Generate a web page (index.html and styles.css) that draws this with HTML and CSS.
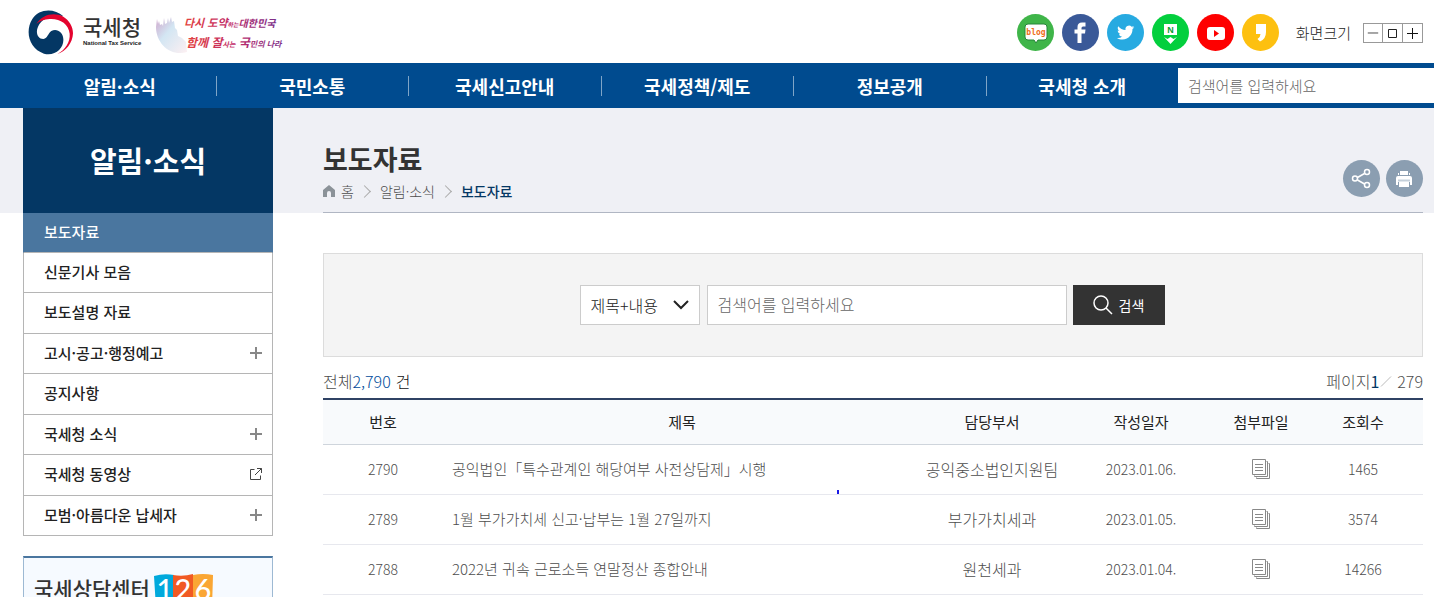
FILE: index.html
```html
<!DOCTYPE html>
<html lang="ko">
<head>
  <meta charset="UTF-8">
  <meta name="viewport" content="width=device-width, initial-scale=1">
  <title>보도자료 | 국세청</title>
  <link rel="stylesheet" href="styles.css">
</head>
<body>
  <svg class="symbols" aria-hidden="true">
    <symbol id="files" viewBox="0 0 18 20">
      <path d="M4.500 18.500v1h13v-15h-1M2.500 16.500v1h13v-15h-1" fill="none" stroke="#888"/>
      <path d="M.5.5h13v15H.5zM3 5.500h8M3 8.500h8M3 11.500h8" fill="none" stroke="#888"/>
    </symbol>
  </svg>

  <header class="header">
    <a class="logo" href="#">
      <svg class="logo-mark" viewBox="12 11 138 138" aria-hidden="true">
        <path d="M118 30C90 5 45 7 25 38 2 75 15 128 60 142c34 8 60-16 58-44-1-21-20-33-36-24-11 7-10 22-24 24-17 0-24-20-16-37C53 36 88 22 118 30z" fill="#043764"/>
        <path d="M37 53C55 23 92 17 118 31c17 10 29 29 29 50-1 29-21 54-47 62 25-13 39-37 37-61-3-30-30-46-60-44-16 1-31 6-40 15z" fill="#e4032e"/>
      </svg>
      <span class="logo-text">
        <strong>국세청</strong>
        <small>National Tax Service</small>
      </span>
    </a>
    <svg class="slogan" viewBox="0 0 130 48" role="img" aria-label="다시 도약하는 대한민국 함께 잘사는 국민의 나라">
      <defs>
        <linearGradient id="ink" x1="0" x2="1">
          <stop offset="0" stop-color="#e3413f"/>
          <stop offset=".5" stop-color="#c02b69"/>
          <stop offset="1" stop-color="#7c2f8a"/>
        </linearGradient>
        <linearGradient id="wave" x1="0" y1="0" x2="1" y2="1">
          <stop offset="0" stop-color="#cfa6cb"/>
          <stop offset=".4" stop-color="#d3e6f3"/>
          <stop offset="1" stop-color="#fdf0f2"/>
        </linearGradient>
      </defs>
      <path d="M2 10l1 5 1-3 1 4 2-1 1 2 1-8 1 6 2-1 1-5 1 5 2-6 1 5 2-1 1 7 2 2 1 6 4 2 4 4 1 10c-16 5-31-8-31-25z" fill="url(#wave)"/>
      <g font-family="Noto Sans CJK KR, sans-serif" font-weight="700" font-style="italic">
        <text x="29" y="18" font-size="11" fill="url(#ink)">다시 도약<tspan font-size="6">하는</tspan><tspan font-size="10">대한민국</tspan></text>
        <text x="31" y="38" font-size="12" fill="url(#ink)">함께 잘<tspan font-size="7">사는</tspan> 국<tspan font-size="8">민의 나라</tspan></text>
      </g>
    </svg>

    <div class="header-right">
      <ul class="sns">
        <li><a href="#" aria-label="블로그">
          <svg viewBox="0 0 37 37"><circle cx="18.500" cy="18.500" r="18.500" fill="#3fb549"/><path d="M11 10h16q3 0 3 3v10q0 3-3 3h-6l-2 3-2-3h-6q-3 0-3-3V13q0-3 3-3z" fill="#fff" stroke="#27863a"/><text x="19" y="21" text-anchor="middle" font-family="DejaVu Sans Mono" font-size="8" font-weight="700" fill="#ef6c17">blog</text></svg>
        </a></li>
        <li><a href="#" aria-label="페이스북">
          <svg viewBox="0 0 37 37"><circle cx="18.500" cy="18.500" r="18.500" fill="#3a5998"/><path d="M15.500 29V19.500H12.500V15.500h3v-2.500q0-4.500 4.500-4.500h3.500v4H21q-1.500 0-1.500 1.500v1.500h4l-.500 4h-3.500V29z" fill="#fff"/></svg>
        </a></li>
        <li><a href="#" aria-label="트위터">
          <svg viewBox="0 0 37 37"><circle cx="18.500" cy="18.500" r="18.500" fill="#27aae1"/><path transform="translate(10 10) scale(.72)" d="M24 4.600c-.9.400-1.800.7-2.800.8 1-.6 1.800-1.600 2.200-2.700-1 .6-2 1-3.100 1.200A4.900 4.900 0 0 0 11.900 8.400C7.800 8.200 4.200 6.300 1.700 3.200.4 5.400 1 8.300 3.200 9.700c-.8 0-1.600-.2-2.200-.6 0 2.300 1.600 4.400 3.900 4.900-.7.200-1.500.2-2.200.1.600 2 2.400 3.400 4.600 3.400A9.900 9.900 0 0 1 0 19.500c2.200 1.400 4.800 2.200 7.500 2.200 9.100 0 14.300-7.700 14-14.600 1-.7 1.800-1.600 2.500-2.500z" fill="#fff"/></svg>
        </a></li>
        <li><a href="#" aria-label="네이버 포스트">
          <svg viewBox="0 0 37 37"><circle cx="18.500" cy="18.500" r="18.500" fill="#03cf3d"/><path d="M12 10h13v11H12zM12 23l3.500 2 3-2 3 2 3.500-2-6.500 7z" fill="#fff"/><text x="18.500" y="19" text-anchor="middle" font-family="Liberation Sans" font-size="9" font-weight="700" fill="#0a9b32">N</text></svg>
        </a></li>
        <li><a href="#" aria-label="유튜브">
          <svg viewBox="0 0 37 37"><circle cx="18.500" cy="18.500" r="18.500" fill="#fe0000"/><rect x="10" y="13" width="18" height="13" rx="3" fill="#fff"/><path d="M17 16l5 3.500-5 3.500z" fill="#fe0000"/></svg>
        </a></li>
        <li><a href="#" aria-label="카카오스토리">
          <svg viewBox="0 0 37 37"><circle cx="18.500" cy="18.500" r="18.500" fill="#fdc010"/><path d="M14 10h10v8q0 7-6 9.500L15.500 25q3-2 3-5H14z" fill="#fff"/></svg>
        </a></li>
      </ul>
      <span class="zoom-label">화면크기</span>
      <div class="zoom">
        <button type="button" aria-label="축소"><svg viewBox="0 0 19 18"><path d="M4 9.500h11" stroke="#444"/></svg></button>
        <button type="button" aria-label="기본"><svg viewBox="0 0 19 18"><path d="M5.500 5.500h8v8h-8z" fill="none" stroke="#222"/></svg></button>
        <button type="button" aria-label="확대"><svg viewBox="0 0 19 18"><path d="M4 9.500h11M9.500 4v11" stroke="#111"/></svg></button>
      </div>
    </div>
  </header>

  <nav class="gnb">
    <ul>
      <li><a href="#">알림·소식</a></li>
      <li><a href="#">국민소통</a></li>
      <li><a href="#">국세신고안내</a></li>
      <li><a href="#">국세정책/제도</a></li>
      <li><a href="#">정보공개</a></li>
      <li><a href="#">국세청 소개</a></li>
    </ul>
    <input type="text" aria-label="통합검색" placeholder="검색어를 입력하세요">
  </nav>

  <div class="container">
    <aside class="side">
      <h2>알림·소식</h2>
      <ul class="lnb">
        <li class="on"><a href="#">보도자료</a></li>
        <li><a href="#">신문기사 모음</a></li>
        <li><a href="#">보도설명 자료</a></li>
        <li><a class="more" href="#">고시·공고·행정예고</a></li>
        <li><a href="#">공지사항</a></li>
        <li><a class="more" href="#">국세청 소식</a></li>
        <li><a href="#">국세청 동영상
          <svg width="12" height="12" viewBox="0 0 12 12"><path d="M4.500 1.500h-4v10h10v-4M7 .5h4.500V5M11.500.5L5 7" fill="none" stroke="#444"/></svg>
        </a></li>
        <li><a class="more" href="#">모범·아름다운 납세자</a></li>
      </ul>
      <a class="callcenter" href="#">
        국세상담센터
        <svg width="60" height="34" viewBox="0 0 60 34" role="img" aria-label="126">
          <path d="M0 2q10-3 20-1v33H2z" fill="#00a9dc"/>
          <path d="M19 1q10 2 20-1v34H19z" fill="#f15a24"/>
          <path d="M39 1q10-2 20 0l-1 33H39z" fill="#faa634"/>
          <g fill="#fff" font-family="Lato, sans-serif" font-size="29" text-anchor="middle">
            <text x="11" y="26">1</text><text x="29" y="26">2</text><text x="49" y="26">6</text>
          </g>
        </svg>
      </a>
    </aside>

    <main class="content">
      <div class="title-area">
        <div>
          <h1>보도자료</h1>
          <ol class="path">
            <li><a href="#"><svg width="12" height="12" viewBox="0 0 12 12"><path d="M6 0l6 5v7H8V8q0-2-2-2T4 8v4H0V5z" fill="#8b9298"/></svg>홈</a></li>
            <li><a href="#">알림·소식</a></li>
            <li><strong>보도자료</strong></li>
          </ol>
        </div>
        <div class="tools">
          <button type="button" aria-label="공유">
            <svg viewBox="0 0 37 37" fill="none" stroke="#fff" stroke-width="1.500"><path d="M14.500 17.500l7-4M14.500 20l7 4"/><circle cx="12" cy="18.500" r="2.500"/><circle cx="24" cy="12" r="2.500"/><circle cx="24" cy="25" r="2.500"/></svg>
          </button>
          <button type="button" aria-label="인쇄">
            <svg viewBox="0 0 37 37"><path d="M14 11h8v4h-8zM12 13h1v2h-1zM23 13h1v2h-1zM10 18q0-2 2-2h12q2 0 2 2v7h-2v-3H12v3h-2zM13 22h10v5H13z" fill="#fff"/><path d="M12 20.500h12" stroke="#c5d0da" stroke-width="2"/></svg>
          </button>
        </div>
      </div>

      <form class="search">
        <select aria-label="검색 구분">
          <option>제목+내용</option>
        </select>
        <input type="text" aria-label="검색어" placeholder="검색어를 입력하세요">
        <button type="button">
          <svg width="20" height="20" viewBox="0 0 20 20"><circle cx="8" cy="8" r="7" fill="none" stroke="#fff" stroke-width="1.500"/><path d="M13 13l6 6" stroke="#fff" stroke-width="1.500"/></svg>
          검색
        </button>
      </form>

      <div class="count">
        <p>전체<span class="total">2,790</span> <span class="unit">건</span></p>
        <p>페이지<strong>1</strong><svg width="12" height="11" viewBox="0 0 12 11"><path d="M1 10.500L11 .5" stroke="#bbb"/></svg>279</p>
      </div>

      <table class="board">
        <colgroup>
          <col class="col-no"><col><col class="col-dept"><col class="col-date"><col class="col-file"><col class="col-hit">
        </colgroup>
        <thead>
          <tr><th>번호</th><th>제목</th><th>담당부서</th><th>작성일자</th><th>첨부파일</th><th>조회수</th></tr>
        </thead>
        <tbody>
          <tr>
            <td class="num">2790</td>
            <td class="subject"><a href="#">공익법인「특수관계인 해당여부 사전상담제」시행</a><i class="tick"></i></td>
            <td class="dept">공익중소법인지원팀</td>
            <td class="num">2023.01.06.</td>
            <td><a href="#" aria-label="첨부파일"><svg width="18" height="20"><use href="#files"/></svg></a></td>
            <td class="num">1465</td>
          </tr>
          <tr>
            <td class="num">2789</td>
            <td class="subject"><a href="#">1월 부가가치세 신고·납부는 1월 27일까지</a></td>
            <td class="dept">부가가치세과</td>
            <td class="num">2023.01.05.</td>
            <td><a href="#" aria-label="첨부파일"><svg width="18" height="20"><use href="#files"/></svg></a></td>
            <td class="num">3574</td>
          </tr>
          <tr>
            <td class="num">2788</td>
            <td class="subject"><a href="#">2022년 귀속 근로소득 연말정산 종합안내</a></td>
            <td class="dept">원천세과</td>
            <td class="num">2023.01.04.</td>
            <td><a href="#" aria-label="첨부파일"><svg width="18" height="20"><use href="#files"/></svg></a></td>
            <td class="num">14266</td>
          </tr>
        </tbody>
      </table>
    </main>
  </div>
</body>
</html>
```
FILE: styles.css
```css
* {
  box-sizing: border-box;
}

body {
  margin: 0;
  background: #fff;
  color: #4d4d4d;
  font-family: "Noto Sans CJK KR", sans-serif;
  font-size: 15px;
  font-weight: 300;
  line-height: 20px;
}

ul, ol, h1, h2, p {
  margin: 0;
  padding: 0;
  list-style: none;
}

a {
  color: inherit;
  text-decoration: none;
}

button, input, select {
  font: inherit;
}

svg {
  display: block;
}

.symbols {
  position: absolute;
  width: 0;
  height: 0;
}

/* header */
.header {
  display: flex;
  align-items: center;
  height: 63px;
  padding: 2px 11px 0 28px;
}

.logo {
  display: flex;
  align-items: center;
  gap: 9px;
}

.logo-mark {
  width: 46px;
  height: 46px;
}

.logo-text strong {
  display: block;
  color: #333;
  font-size: 21px;
  font-weight: 500;
  line-height: 20px;
}

.logo-text small {
  display: block;
  color: #222;
  font-family: "Liberation Sans", sans-serif;
  font-size: 6px;
  font-weight: 700;
  line-height: 14px;
}

.slogan {
  width: 130px;
  height: 48px;
  margin-left: 14px;
}

.header-right {
  display: flex;
  align-items: center;
  margin-left: auto;
}

.sns {
  display: flex;
  gap: 8px;
}

.sns svg {
  width: 37px;
  height: 37px;
}

.zoom-label {
  margin: 0 12px 0 17px;
  color: #222;
}

.zoom {
  display: flex;
  border: 1px solid #999;
}

.zoom button {
  width: 18px;
  height: 18px;
  padding: 0;
  border: 0;
  background: #fff;
}

.zoom button + button {
  width: 20px;
  border-left: 1px solid #999;
}

/* main menu */
.gnb {
  display: grid;
  grid-template-columns: 1155fr 256fr;
  align-items: center;
  height: 45px;
  padding-left: 23px;
  background: #004b8f;
}

.gnb ul {
  display: flex;
}

.gnb li {
  flex: 1;
  border-left: 1px solid #7fa5c7;
  color: #fff;
  font-size: 18px;
  font-weight: 700;
  text-align: center;
}

.gnb li:first-child {
  border-left-color: transparent;
}

.gnb input {
  min-width: 0;
  height: 35px;
  padding: 0 10px;
  border: 0;
  background: #fff;
}

input::placeholder {
  color: #666;
  opacity: 1;
}

/* page */
.container {
  display: flex;
  gap: 50px;
  padding: 0 11px 0 23px;
  background: linear-gradient(#eff0f5 105px, #fff 105px);
}

.side {
  flex: 0 0 250px;
}

.side h2 {
  height: 105px;
  background: #043764;
  color: #fff;
  font-size: 29px;
  font-weight: 700;
  line-height: 104px;
  text-align: center;
}

.lnb li {
  height: 40px;
  border: 1px solid #b5b5b5;
  border-top: 0;
  color: #222;
  font-size: 15px;
  font-weight: 500;
}

.lnb li:nth-child(odd) {
  height: 41px;
}

.lnb li.on {
  height: 40px;
  border-color: #4a769f;
  border-bottom-color: #b5b5b5;
  background: #4a769f;
  color: #fff;
}

.lnb a {
  display: flex;
  align-items: center;
  justify-content: space-between;
  height: 100%;
  padding: 0 10px 2px 20px;
}

.more::after {
  content: "";
  width: 12px;
  height: 12px;
  background:
    linear-gradient(#888, #888) center / 12px 2px no-repeat,
    linear-gradient(#888, #888) center / 2px 12px no-repeat;
}

.callcenter {
  display: flex;
  align-items: flex-start;
  gap: 4px;
  margin-top: 20px;
  padding: 16px 10px 6px;
  border: 1px solid #9db9d3;
  border-top: 2px solid #4a769f;
  background: #f6faff;
  color: #333;
  font-size: 21px;
  font-weight: 500;
  line-height: 28px;
}

.content {
  flex: 1;
  min-width: 0;
}

.title-area {
  display: flex;
  justify-content: space-between;
  height: 105px;
  border-bottom: 1px solid #b0b6c3;
}

.title-area h1 {
  margin-top: 33px;
  color: #333;
  font-size: 27px;
  font-weight: 700;
  line-height: 36px;
}

.path {
  display: flex;
  align-items: center;
  margin-top: 4px;
  font-size: 14px;
}

.path li {
  display: flex;
  align-items: center;
}

.path li a {
  display: flex;
  align-items: center;
  gap: 6px;
}

.path li + li::before {
  content: "";
  width: 8px;
  height: 8px;
  margin: 0 11px 0 6px;
  border: solid #aaa;
  border-width: 1px 1px 0 0;
  transform: rotate(45deg);
}

.path strong {
  color: #043764;
  font-weight: 500;
}

.tools {
  display: flex;
  gap: 6px;
  margin-top: 52px;
}

.tools button {
  width: 37px;
  height: 37px;
  padding: 0;
  border: 0;
  border-radius: 50%;
  background: #8b9eb1;
}

/* board search */
.search {
  display: flex;
  justify-content: center;
  margin-top: 40px;
  padding: 31px 22px 31px 20px;
  border: 1px solid #dcdcdc;
  background: #f4f4f4;
  font-size: 16px;
}

.search select {
  width: 120px;
  height: 40px;
  margin-right: 7px;
  padding: 0 10px;
  border: 1px solid #ccc;
  border-radius: 0;
  appearance: none;
  background: #fff url("data:image/svg+xml,%3Csvg xmlns='http://www.w3.org/2000/svg' width='16' height='10'%3E%3Cpath d='M1 1l7 7 7-7' fill='none' stroke='%23222' stroke-width='2'/%3E%3C/svg%3E") right 10px center no-repeat;
  color: #222;
}

.search input {
  flex: 0 1 360px;
  min-width: 0;
  height: 40px;
  margin-right: 6px;
  padding: 0 10px 2px;
  border: 1px solid #ccc;
}

.search button {
  display: flex;
  align-items: center;
  justify-content: center;
  gap: 6px;
  width: 92px;
  height: 40px;
  border: 0;
  background: #333;
  color: #fff;
  font-size: 14px;
  font-weight: 400;
}

.count {
  display: flex;
  justify-content: space-between;
  padding: 14px 0 7px;
  font-size: 16px;
}

.count p {
  display: flex;
  align-items: center;
}

.count .total {
  margin-right: 5px;
  color: #004b9b;
}

.count .unit {
  color: #111;
}

.count strong {
  color: #043764;
  font-weight: 400;
}

.count svg {
  margin: 0 5px 0 1px;
}

/* board list */
.board {
  width: 100%;
  border-top: 2px solid #2f4264;
  border-collapse: collapse;
  table-layout: fixed;
  text-align: center;
}

.col-no, .col-hit {
  width: 120px;
}

.col-dept {
  width: 142px;
}

.col-date {
  width: 156px;
}

.col-file {
  width: 84px;
}

.board th {
  height: 45px;
  padding: 0;
  border-bottom: 1px solid #cfd5dc;
  background: #f8fafc;
  color: #222;
  font-weight: 400;
}

.board td {
  height: 50px;
  padding: 0;
  border-bottom: 1px solid #e7e8ee;
}

.board .num {
  font-size: 14px;
}

.board .dept {
  font-size: 16px;
}

.board .subject {
  position: relative;
  padding-left: 9px;
  text-align: left;
}

.board td svg {
  margin: 0 auto;
}

.tick {
  position: absolute;
  bottom: 0;
  left: 394px;
  width: 2px;
  height: 4px;
  background: #1a1ae6;
}
```
